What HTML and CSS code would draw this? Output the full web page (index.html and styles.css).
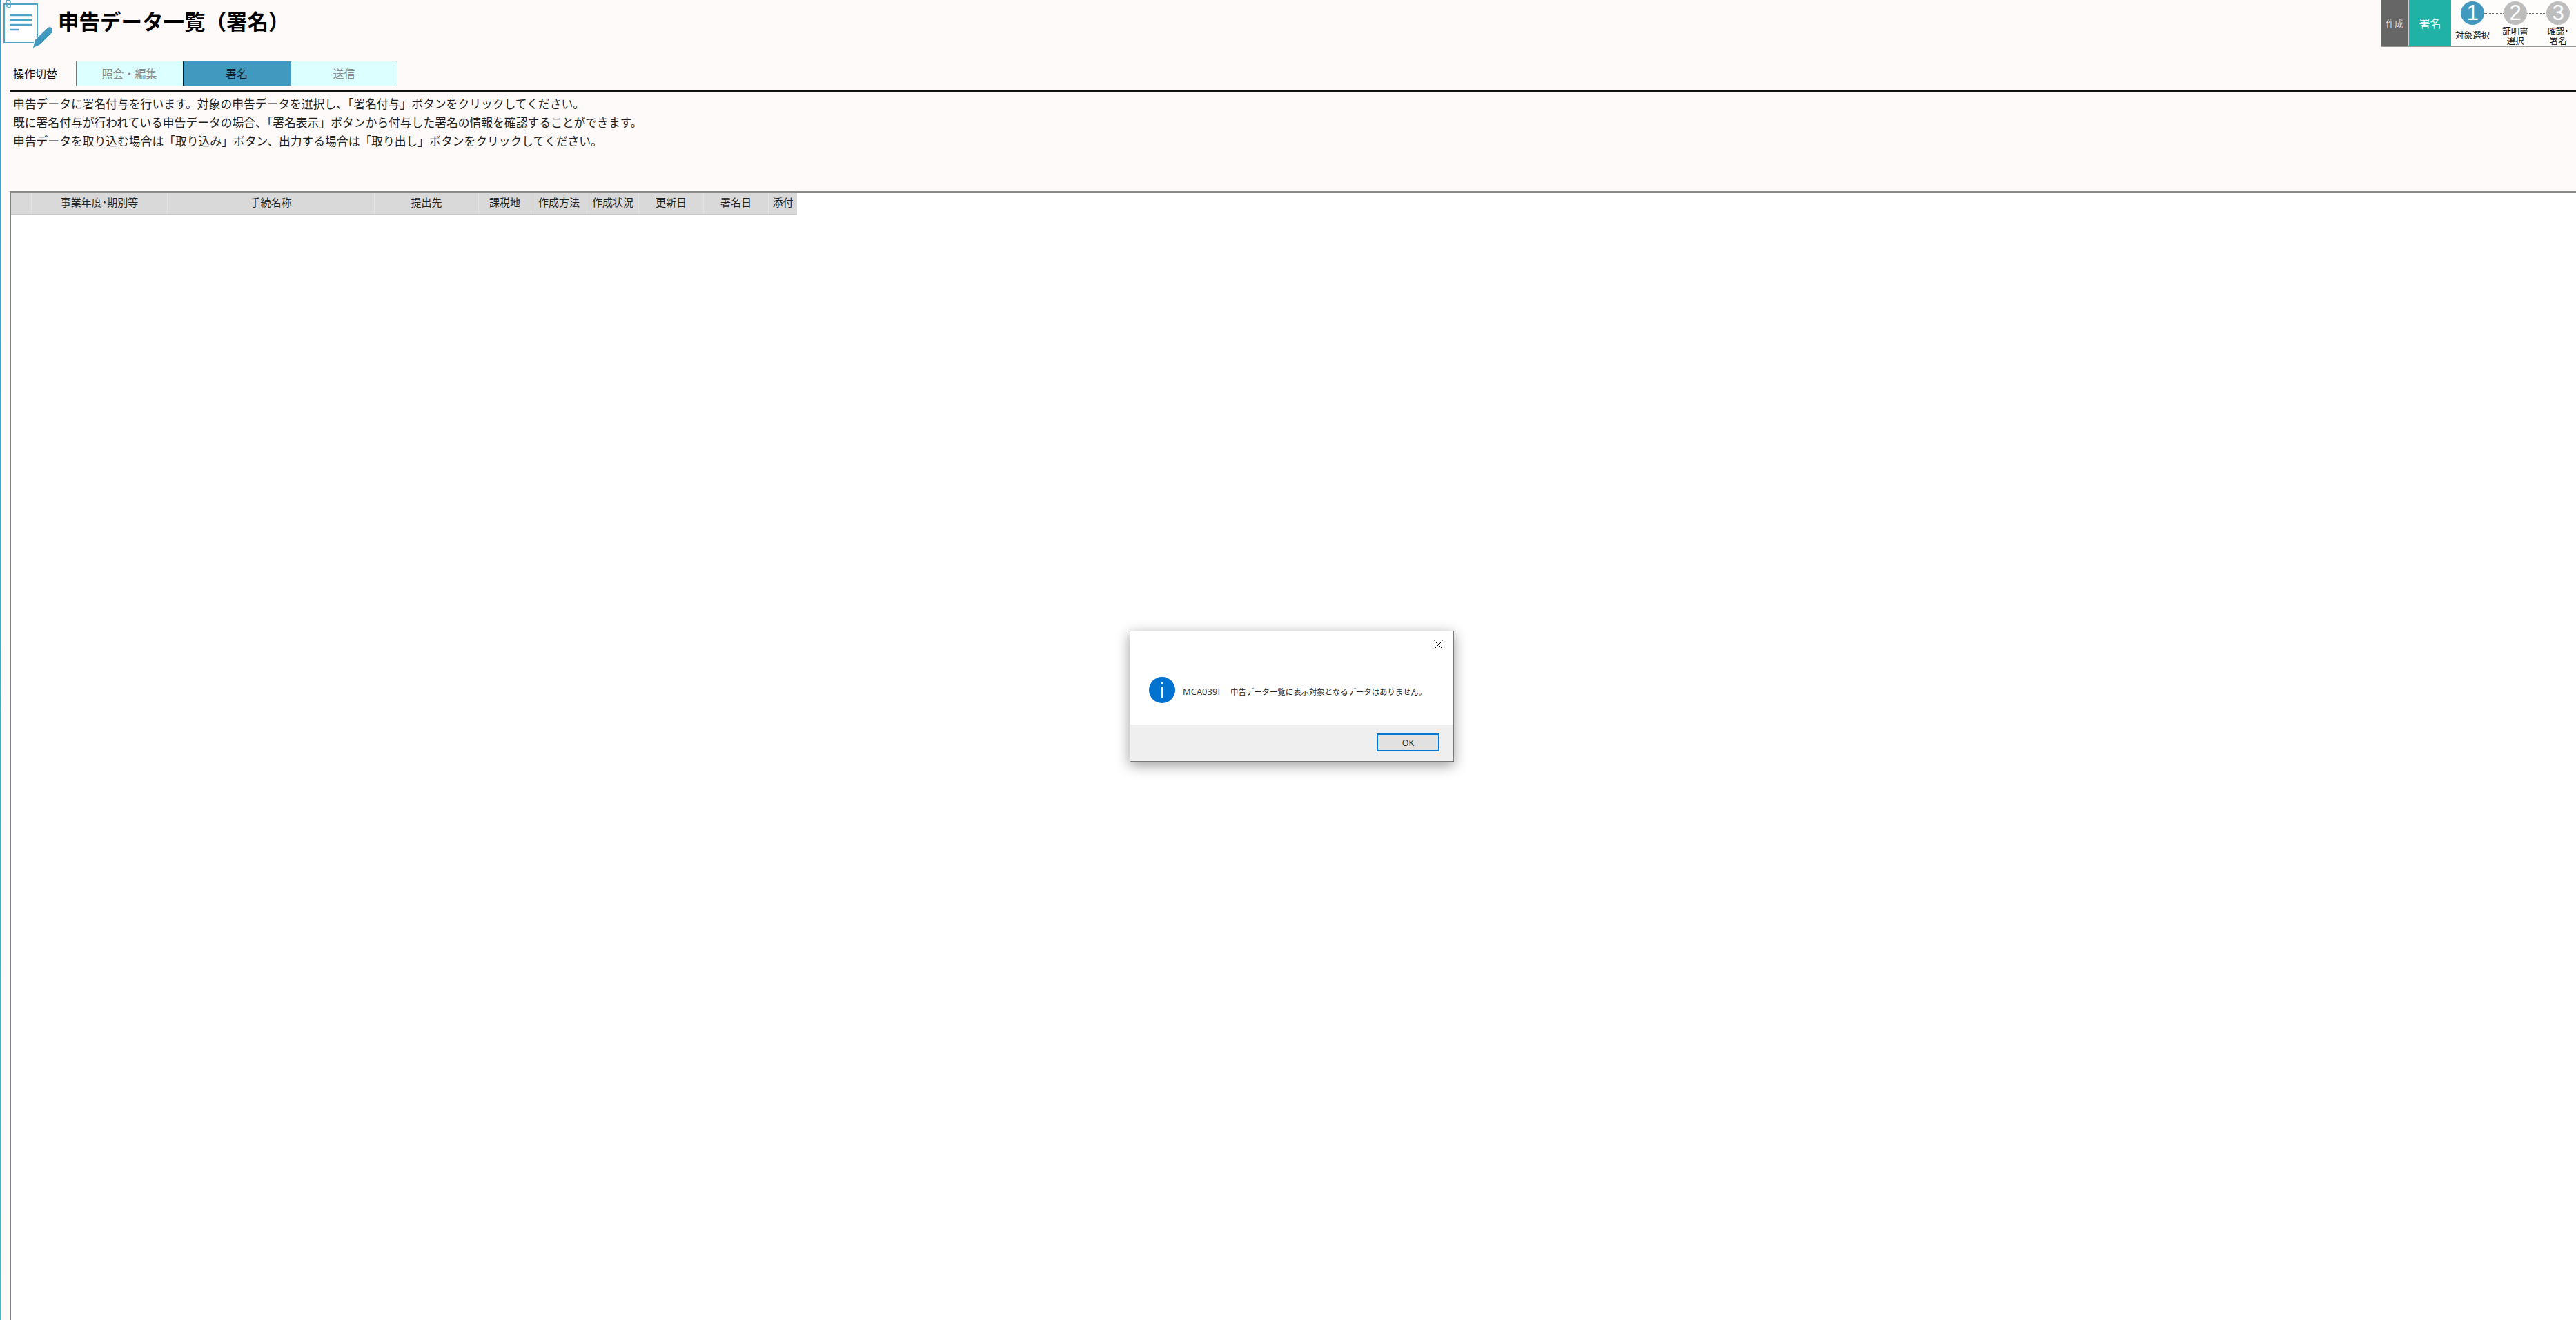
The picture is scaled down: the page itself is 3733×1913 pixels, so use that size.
FILE: index.html
```html
<!DOCTYPE html>
<html lang="ja">
<head>
    <meta charset="utf-8">
    <title>申告データ一覧（署名）</title>
    <link rel="stylesheet" href="styles.css">
</head>
<body>
<div class="page">
    <div class="head">
        <div class="title-box">
            <svg class="title-icon" width="76" height="72" viewBox="0 0 76 72">
                <rect x="6" y="6" width="48" height="56" fill="#fff" stroke="#4ea3c9" stroke-width="2"/>
                <path d="M9 10V3a3 3 0 0 1 6 0v6a2 2 0 0 1-4 0V4" fill="none" stroke="#4ea3c9" stroke-width="1.6"/>
                <path d="M14 22h32M14 29h32M14 36h32M14 43h14" stroke="#4ea3c9" stroke-width="2.4"/>
                <path d="M47 70l4-13 18-17a4 4 0 0 1 6 0l1 1a4 4 0 0 1 0 6L58 65z" fill="#4299c0" stroke="#fff" stroke-width="1"/>
            </svg>
            <h1>申告データ一覧（署名）</h1>
        </div>
        <div class="steps">
            <div class="mode mode-off">作成</div>
            <div class="mode mode-on">署名</div>
            <div class="step-list">
                <div class="step step-now">
                    <span class="num">1</span>
                    <span class="cap">対象選択</span>
                </div>
                <div class="step">
                    <span class="num">2</span>
                    <span class="cap">証明書<br>選択</span>
                </div>
                <div class="step">
                    <span class="num">3</span>
                    <span class="cap">確認･<br>署名</span>
                </div>
            </div>
        </div>
    </div>

    <div class="switch-row">
        <label>操作切替</label>
        <div class="tabs">
            <a class="tab tab-a">照会・編集</a>
            <a class="tab tab-b active">署名</a>
            <a class="tab tab-c">送信</a>
        </div>
    </div>

    <div class="info">
        <p>申告データに署名付与を行います。対象の申告データを選択し、「署名付与」ボタンをクリックしてください。</p>
        <p>既に署名付与が行われている申告データの場合、「署名表示」ボタンから付与した署名の情報を確認することができます。</p>
        <p>申告データを取り込む場合は「取り込み」ボタン、出力する場合は「取り出し」ボタンをクリックしてください。</p>
    </div>

    <div class="list">
        <div class="list-head">
            <div></div>
            <div>事業年度･期別等</div>
            <div>手続名称</div>
            <div>提出先</div>
            <div>課税地</div>
            <div>作成方法</div>
            <div>作成状況</div>
            <div>更新日</div>
            <div>署名日</div>
            <div>添付</div>
        </div>
    </div>
</div>

<div class="dialog">
    <svg class="close" width="13" height="13" viewBox="0 0 13 13">
        <path d="M.5.5l12 12M12.5.5l-12 12" stroke="#000" stroke-width="1"/>
    </svg>
    <div class="dialog-body">
        <svg class="info-icon" width="38" height="38" viewBox="0 0 38 38">
            <circle cx="19" cy="19" r="19" fill="#0072cf"/>
            <rect x="18" y="8" width="2.4" height="3" fill="#fff"/>
            <rect x="18" y="14" width="2.4" height="16" fill="#fff"/>
        </svg>
        <p><span class="code">MCA039I</span>申告データ一覧に表示対象となるデータはありません。</p>
    </div>
    <div class="dialog-foot">
        <button type="button">OK</button>
    </div>
</div>
</body>
</html>
```

FILE: styles.css
```css
* {
    box-sizing: border-box;
}

html, body {
    margin: 0;
    height: 100%;
    overflow: hidden;
}

body {
    background-color: #fffafa;
    color: #1a1a1a;
    font-family: "Noto Sans CJK JP", "Noto Sans", sans-serif;
}

.page {
    height: 100%;
    display: flex;
    flex-direction: column;
    border-left: 2px solid #4299c0;
    border-image: linear-gradient(#4299c0, #4ab4c2) 1;
}

.head {
    height: 88px;
    display: flex;
    justify-content: space-between;
    align-items: flex-start;
}

.title-box {
    display: flex;
    align-items: flex-start;
}

.title-icon {
    margin-left: -2px;
    flex-shrink: 0;
}

h1 {
    margin: 10px 0 0 8px;
    font-size: 30.5px;
    line-height: 40px;
    font-weight: 700;
    color: #000;
}

.steps {
    width: 283px;
    height: 68px;
    display: flex;
    border-bottom: 2px solid #999;
    background-color: #fffdfc;
    overflow: hidden;
}

.mode {
    flex-shrink: 0;
    display: flex;
    align-items: center;
    justify-content: center;
}

.mode-off {
    width: 41px;
    background-color: #666;
    color: #ddd;
    font-size: 13px;
    border-right: 1px solid #ccc;
}

.mode-on {
    width: 61px;
    background-color: #20b2a6;
    color: #e8fbf8;
    font-size: 16px;
}

.step-list {
    display: flex;
    padding-top: 2px;
}

.step {
    width: 62px;
    flex-shrink: 0;
    display: flex;
    flex-direction: column;
    align-items: center;
    position: relative;
}

.step + .step::before {
    content: "";
    position: absolute;
    top: 17px;
    left: -14px;
    width: 28px;
    border-top: 1px dotted #777;
}

.num {
    width: 34px;
    height: 34px;
    border-radius: 50%;
    background-color: #bdbdbd;
    color: #fff;
    font-family: "Liberation Sans", sans-serif;
    font-size: 31px;
    line-height: 34px;
    text-align: center;
}

.step-now .num {
    background-color: #4299c0;
}

.cap {
    margin-top: 2px;
    font-size: 12.5px;
    line-height: 14px;
    text-align: center;
    white-space: nowrap;
    color: #111;
}

.step-now .cap {
    margin-top: 8px;
}

.switch-row {
    height: 46px;
    margin-left: 12px;
    padding-bottom: 7px;
    display: flex;
    align-items: flex-start;
    border-bottom: 3px solid #111;
}

.switch-row label {
    width: 96px;
    padding-left: 5px;
    font-size: 16px;
    line-height: 36px;
    color: #111;
}

.tabs {
    height: 37px;
    display: flex;
    border: 1px solid #777;
}

.tab {
    display: flex;
    align-items: center;
    justify-content: center;
    padding-bottom: 2px;
    background-color: #dcffff;
    color: #8a8a8a;
    font-size: 16px;
}

.tab-a {
    width: 155px;
    padding-right: 2px;
}

.tab-b {
    width: 156px;
    padding-right: 2px;
}

.tab-c {
    width: 153px;
}

.tab.active {
    background-color: #4299c0;
    color: #10222c;
    outline: 1px solid #111;
}

.info {
    height: 143px;
    padding: 3px 0 0 17px;
}

.info p {
    margin: 0;
    font-size: 16.8px;
    line-height: 27px;
    color: #222;
}

.list {
    flex: 1;
    margin-left: 12px;
    background-color: #fff;
    border-top: 2px solid #8a8a8a;
    border-left: 2px solid #808080;
}

.list-head {
    width: 1139px;
    height: 33px;
    display: grid;
    grid-template-columns: 30px 197px 300px 151px 76px 81px 75px 94px 94px 41px;
    background-color: #d9d9d9;
    border-bottom: 2px solid #c8c8c8;
}

.list-head div {
    border-right: 1px solid #e3e3e3;
    font-size: 15px;
    line-height: 28px;
    text-align: center;
    color: #222;
    white-space: nowrap;
}

.list-head div:last-child {
    border-right: 0;
}

.dialog {
    position: absolute;
    left: 1637px;
    top: 914px;
    width: 470px;
    height: 190px;
    display: flex;
    flex-direction: column;
    background-color: #fff;
    border: 1px solid #7a7a7a;
    box-shadow: 0 5px 18px rgba(0, 0, 0, 0.4);
}

.close {
    position: absolute;
    top: 13px;
    right: 15px;
}

.dialog-body {
    flex: 1;
    display: flex;
    align-items: center;
    padding: 34px 0 0 27px;
}

.info-icon {
    flex-shrink: 0;
}

.dialog-body p {
    margin: 4px 0 0 11px;
    font-size: 11.4px;
    color: #222;
    white-space: nowrap;
}

.code {
    display: inline-block;
    width: 69px;
    font-family: "Open Sans", sans-serif;
    font-size: 13px;
    color: #333;
}

.dialog-foot {
    height: 53px;
    display: flex;
    justify-content: flex-end;
    align-items: flex-start;
    padding: 13px 20px 0 0;
    background-color: #efefef;
}

.dialog-foot button {
    width: 91px;
    height: 26px;
    padding: 0;
    background-color: #e1e1e1;
    border: 2px solid #0078d7;
    font-family: "Open Sans", sans-serif;
    font-size: 12.5px;
    color: #222;
}
```
